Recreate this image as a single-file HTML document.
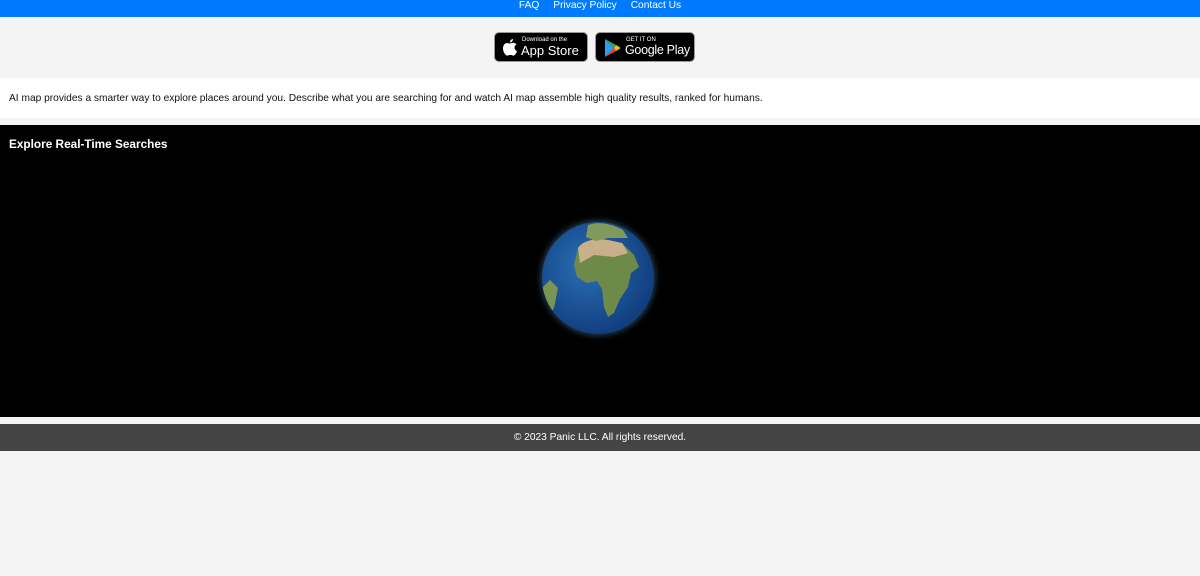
<!DOCTYPE html>
<html><head><meta charset="utf-8"><style>
body{margin:0;width:1200px;height:576px;background:#f4f4f4;font-family:"Liberation Sans",Arial,sans-serif;overflow:hidden;position:relative}
.top{position:absolute;left:0;top:0;width:1200px;height:17px;background:#007bff;color:#fff;font-size:10.2px;text-align:center;line-height:12px}
.top span{margin:0 7px}
.badge{position:absolute;top:32px;height:30px;background:#000;border-radius:5px;color:#fff;border:1px solid #999;box-sizing:border-box;white-space:nowrap}
.desc{position:absolute;left:0;top:78px;width:1200px;height:40px;background:#fff;font-size:10.2px;color:#111;line-height:41px;text-indent:9px}
.black{position:absolute;left:0;top:125px;width:1200px;height:292px;background:#000}
.black h3{margin:0;position:absolute;left:9px;top:12px;font-size:11.8px;color:#fff;font-weight:bold}
.foot{position:absolute;left:0;top:424px;width:1200px;height:27px;background:#444;color:#fff;font-size:10.2px;text-align:center;line-height:28px}
</style></head><body>
<div class="top"><span>FAQ</span><span>Privacy Policy</span><span>Contact Us</span></div>
<div class="badge" style="left:494px;width:94px">
<svg width="16" height="18" style="position:absolute;left:7px;top:6px" viewBox="0 0 16 18"><path d="M11 0c0 2-1.5 3.5-3 3.5 0-2 1.5-3.5 3-3.5zM8 4.5c1 0 2-.8 3.2-.8 1.3 0 2.5.7 3.2 1.8-2.8 1.6-2.3 5.5.6 6.6-.6 1.8-2 4.5-3.5 4.5-1.2 0-1.5-.7-3-.7s-2 .7-3.2.7C3.5 16.6 1 13 1 9.5 1 6 3.2 4 5 4c1.3 0 2.2.5 3 .5z" fill="#fff"/></svg>
<div style="position:absolute;left:27px;top:4px;font-size:6px">Download on the</div>
<div style="position:absolute;left:26px;top:10px;font-size:13px">App Store</div></div>
<div class="badge" style="left:595px;width:100px">
<svg width="16" height="18" style="position:absolute;left:8px;top:6px" viewBox="0 0 16 18"><path d="M1 0l9 9-9 9z" fill="#2a9ff0"/><path d="M1 0l11 6-2 3z" fill="#34a853"/><path d="M1 18l11-6-2-3z" fill="#ea4335"/><path d="M12 6l3.5 2c.7.5.7 1.5 0 2L12 12 10 9z" fill="#fbbc04"/></svg>
<div style="position:absolute;left:30px;top:4px;font-size:6px">GET IT ON</div>
<div style="position:absolute;left:29px;top:10px;font-size:12.5px;letter-spacing:-0.3px">Google Play</div></div>
<div class="desc">AI map provides a smarter way to explore places around you. Describe what you are searching for and watch AI map assemble high quality results, ranked for humans.</div>
<div class="black"><h3>Explore Real-Time Searches</h3>
<svg width="140" height="140" style="position:absolute;left:528px;top:83px" viewBox="0 0 140 140">
<defs><radialGradient id="g" cx="0.4" cy="0.4" r="0.6"><stop offset="0" stop-color="#2a6fb5"/><stop offset="1" stop-color="#123f80"/></radialGradient>
<clipPath id="c"><circle cx="70" cy="70" r="56"/></clipPath>
<filter id="b"><feGaussianBlur stdDeviation="3"/></filter></defs>
<circle cx="70" cy="70" r="58" fill="#5aa0d0" opacity=".35" filter="url(#b)"/>
<circle cx="70" cy="70" r="56" fill="url(#g)"/>
<g clip-path="url(#c)">
<path d="M50 40c5-7 15-10 30-8l14 3 12 12 5 12-8 6-3 14-8 12-6 14-6 4-4-10-2-18-5-8-10 2-10-6-3-12z" fill="#6e8a4a"/>
<path d="M50 40c5-7 15-10 30-8l14 3 6 10-14 4-20-2-14 8z" fill="#c9b08a"/>
<path d="M60 17c8-3 20-3 35 5l5 8-20 0-12 3-10-4z" fill="#7f9a5a"/>
<path d="M14 80l8-8 8 8-4 20-8 12-6-8z" fill="#7a9452"/>
</g></svg>
</div>
<div class="foot">© 2023 Panic LLC. All rights reserved.</div>
</body></html>
